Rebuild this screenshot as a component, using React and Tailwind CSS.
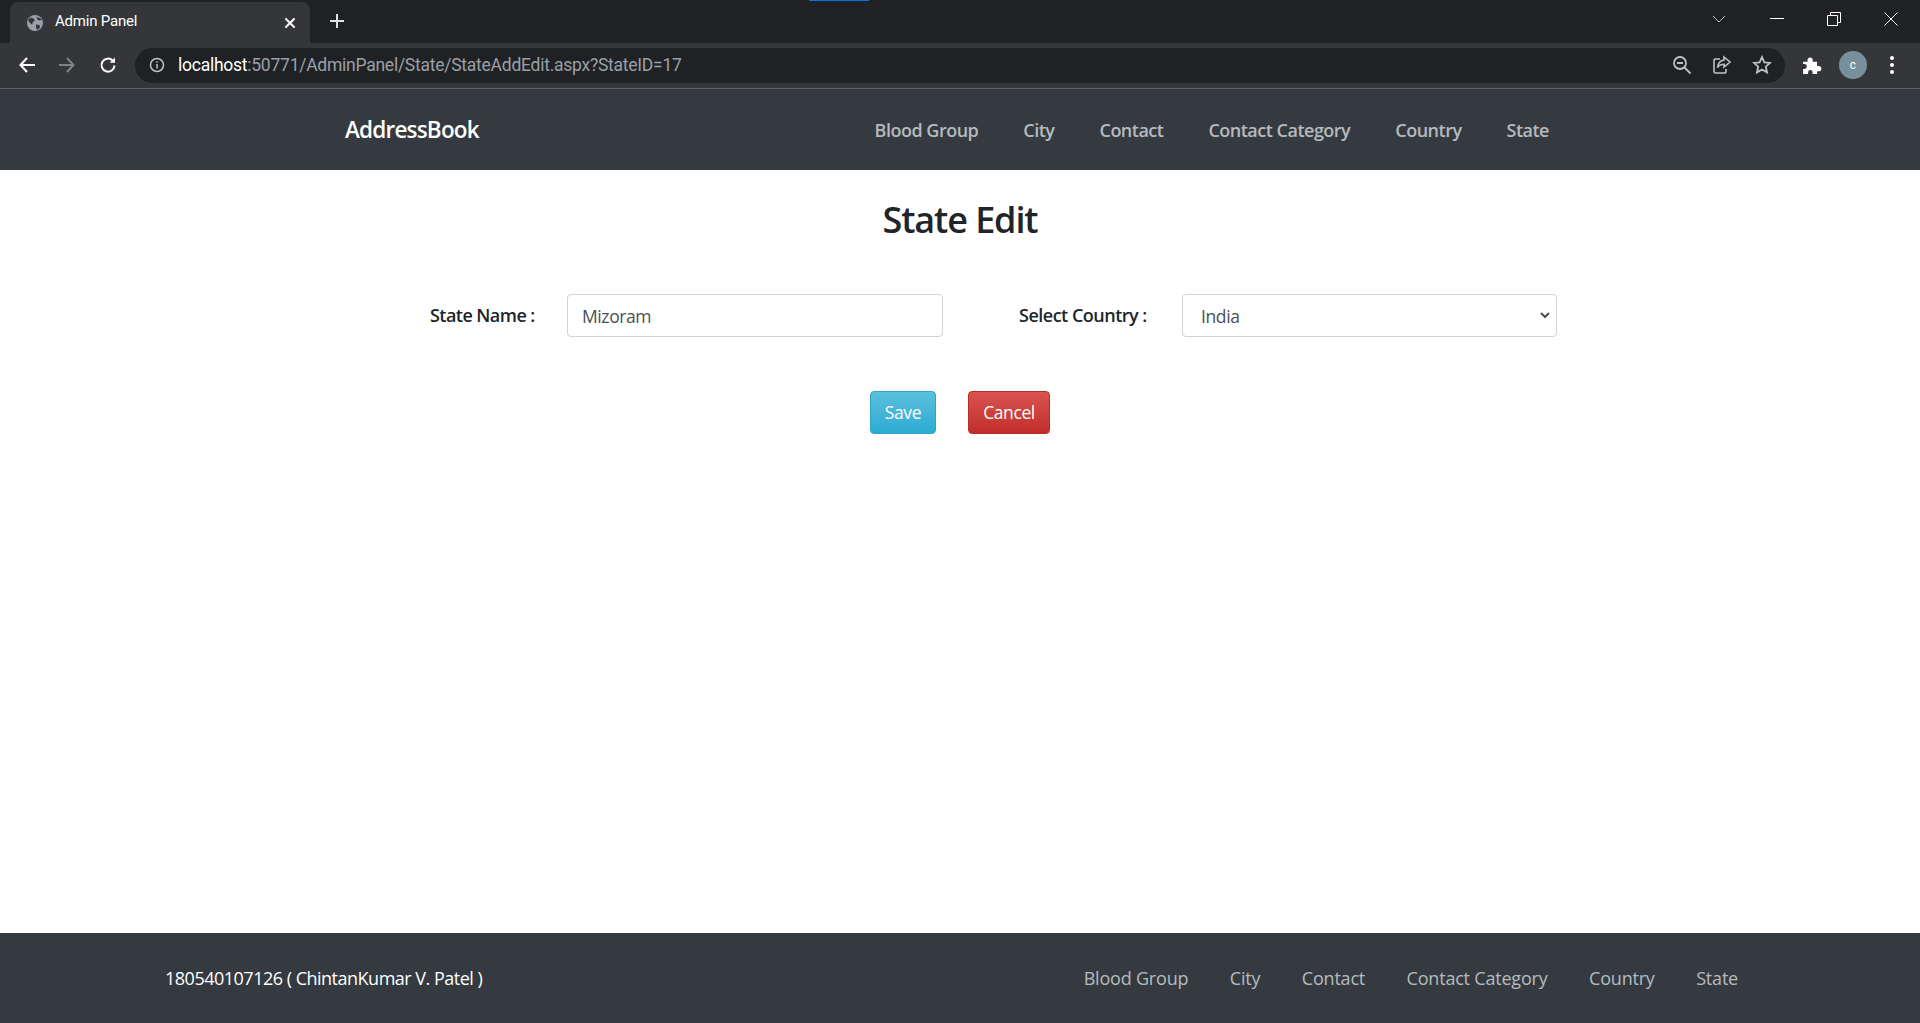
import React from 'react';

const uiFont = "font-['Open_Sans','Noto_Sans',sans-serif]";
const chromeFont = "font-['Roboto','Noto_Sans',sans-serif]";

const links = ['Blood Group', 'City', 'Contact', 'Contact Category', 'Country', 'State'];

const ChromeBar = () => (
  <div className={`relative shrink-0 ${chromeFont}`}>
    <div className="absolute top-0 left-[809px] w-[60px] h-px bg-[#0b74d8]"></div>

    {/* tab strip */}
    <div className="h-[43px] bg-[#202124] flex items-end">
      <div className="ml-[10px] w-[300px] h-[41px] bg-[#35363a] rounded-t-lg flex items-center text-white">
        <svg width="18" height="18" viewBox="0 0 18 18" className="ml-[16px] shrink-0">
          <circle cx="9" cy="9" r="8" fill="#9aa0a6" />
          <path d="M4 3.500l3.500 1 1.500 2-2 1.500-1 2.500-2-1.500-2-2.500zM10 10.500l3.500.5.5 2.500-2.500 2.500-1.500-2.500zM10.500 1.500l1 2 2.500.5 2 2-3 .5-2-1.500z" fill="#35363a" />
        </svg>
        <span className="ml-[11px] text-[15px] leading-none tracking-[-0.2px] mb-[2px]">Admin Panel</span>
        <svg width="12" height="12" viewBox="0 0 12 12" className="ml-auto mr-[14px]" stroke="white" strokeWidth="2" strokeLinecap="round">
          <path d="M2 2l8 8M10 2l-8 8" />
        </svg>
      </div>
      <div className="ml-[19px] mb-[14px] w-4 h-4 flex items-center justify-center">
        <svg width="16" height="16" viewBox="0 0 16 16" stroke="#dfe1e5" strokeWidth="2">
          <path d="M8 1v14M1 8h14" />
        </svg>
      </div>
      <div className="ml-auto self-stretch flex items-center relative">
        <svg width="14" height="8" viewBox="0 0 14 8" fill="none" stroke="#bdc1c6" strokeWidth="1" className="mr-[44px] mb-[6px]">
          <path d="M1 1l6 6 6-6" />
        </svg>
        <div className="w-[14px] h-px bg-white mr-[43px] mb-[6px]"></div>
        <svg width="14" height="14" viewBox="0 0 14 14" fill="none" stroke="white" strokeWidth="1" className="mr-[43px] mb-[6px]">
          <path d="M.5 3.500h10v10H.5zM3.500 3.500V.5h10v10h-3" />
        </svg>
        <svg width="14" height="14" viewBox="0 0 14 14" fill="none" stroke="white" strokeWidth="1" className="mr-[22px] mb-[6px]">
          <path d="M.5.5l13 13M13.500.5l-13 13" />
        </svg>
      </div>
    </div>

    {/* toolbar */}
    <div className="h-[46px] bg-[#35363a] border-b border-[#5f6368] flex items-center pb-[1px]">
      <svg width="18" height="18" viewBox="0 0 18 18" fill="none" stroke="white" strokeWidth="2" className="ml-[18px]">
        <path d="M17 9H3M9 2L2.500 9 9 16" />
      </svg>
      <svg width="18" height="18" viewBox="0 0 18 18" fill="none" stroke="#7f8286" strokeWidth="2" className="ml-[22px]">
        <path d="M1 9h14M9 2l6.500 7L9 16" />
      </svg>
      <svg width="18" height="18" viewBox="0 0 18 18" fill="none" stroke="white" strokeWidth="2" className="ml-[23px]">
        <path d="M15.500 9.500a6.500 6.500 0 1 1-1.900-5" />
        <path d="M16 1.500v5.300h-5.300z" fill="white" stroke="none" />
      </svg>
      <div className="ml-[18px] w-[1650px] h-[35px] rounded-full bg-[#202124] flex items-center">
        <svg width="16" height="16" viewBox="0 0 16 16" fill="none" className="ml-[14px] shrink-0">
          <circle cx="8" cy="8" r="6.500" stroke="#bdc1c6" strokeWidth="1.500" />
          <path d="M8 7v4.500M8 4.300v1.500" stroke="#bdc1c6" strokeWidth="1.500" />
        </svg>
        <span className="ml-[13px] text-[17.500px] leading-none tracking-[-0.25px] text-white mt-[2px]">
          localhost<span className="text-[#9aa0a6]">:50771/AdminPanel/State/StateAddEdit.aspx?StateID=17</span>
        </span>
        <svg width="20" height="20" viewBox="0 0 20 20" fill="none" stroke="#bdc1c6" strokeWidth="1.800" className="ml-auto shrink-0">
          <circle cx="8" cy="8" r="6" />
          <path d="M5 8h6M12.500 12.500l6 6" />
        </svg>
        <svg width="20" height="20" viewBox="0 0 20 20" fill="none" stroke="#bdc1c6" strokeWidth="1.600" className="ml-[20px] shrink-0">
          <path d="M8 4H3.500A1.500 1.500 0 0 0 2 5.500v11A1.500 1.500 0 0 0 3.500 18h9a1.500 1.500 0 0 0 1.500-1.500V14" />
          <path d="M12 2l6 5-6 5V9.300c-3 0-5 1-6.500 3.200C6 9 8 5.500 12 5z" />
        </svg>
        <svg width="20" height="20" viewBox="0 0 20 20" fill="none" stroke="#bdc1c6" strokeWidth="1.800" className="ml-[20px] mr-[13px] shrink-0">
          <path d="M10 2l2.400 5.300 5.600.6-4.200 3.800 1.200 5.700-5-2.900-5 2.900 1.200-5.700L2 7.900l5.600-.6z" />
        </svg>
      </div>
      <svg width="20" height="20" viewBox="0 0 18 18" fill="white" className="ml-[17px] shrink-0">
        <path d="M1 6h4V4.500a2.300 2.300 0 0 1 4.600 0V6h4v4h1.500a2.300 2.300 0 0 1 0 4.600h-1.500V17H9.500v-1.500a2 2 0 0 0-4 0V17H1v-4.500h1.200a2.200 2.200 0 0 0 0-4.400H1z" />
      </svg>
      <div className="ml-[17px] w-7 h-7 rounded-full bg-[#78909c] text-white text-[12px] flex items-center justify-center shrink-0">c</div>
      <div className="ml-[23px] flex flex-col gap-[3px] shrink-0">
        <span className="w-1 h-1 rounded-full bg-white"></span>
        <span className="w-1 h-1 rounded-full bg-white"></span>
        <span className="w-1 h-1 rounded-full bg-white"></span>
      </div>
    </div>
  </div>
);

const Header = () => (
  <nav className="h-[81px] shrink-0 bg-[#343a40] flex items-center pl-[345px] pr-[371px] pt-[1px]">
    <span className="text-white text-[22.500px] font-semibold tracking-[-0.8px]">AddressBook</span>
    <ul className="ml-auto flex gap-[45px]">
      {links.map((l) => (
        <li key={l} className="text-[#b6babe] text-[18px] font-semibold tracking-[-0.5px]">{l}</li>
      ))}
    </ul>
  </nav>
);

const Footer = () => (
  <footer className="h-[90px] shrink-0 bg-[#343a40] flex items-center pl-[165px] pr-[182px]">
    <span className="text-white text-[18px] tracking-[-0.5px]">180540107126 ( ChintanKumar V. Patel )</span>
    <ul className="ml-auto flex gap-[41.500px]">
      {links.map((l) => (
        <li key={l} className="text-[#b6babe] text-[18px] font-medium tracking-[-0.2px]">{l}</li>
      ))}
    </ul>
  </footer>
);

export default function App() {
  return (
    <div className={`h-[1023px] flex flex-col overflow-hidden bg-white ${uiFont}`}>
      <ChromeBar />
      <Header />
      <main className="flex-1">
        <h1 className="mt-[25px] text-center text-[36px] leading-[50px] font-semibold text-[#212529] tracking-[-1.1px]">State Edit</h1>

        <div className="mt-[49px] flex items-center pl-[430px]">
          <label className="w-[137px] text-[18px] font-semibold text-[#212529] tracking-[-0.55px]">State Name :</label>
          <input
            readOnly
            value="Mizoram"
            className="w-[376px] h-[43px] border border-[#ced4da] rounded px-[14px] text-[17.500px] text-[#495057] tracking-[-0.4px] outline-none"
          />
          <label className="ml-[76px] w-[163px] text-[18px] font-semibold text-[#212529] tracking-[-0.5px]">Select Country :</label>
          <div className="relative w-[375px] h-[43px]">
            <select className="appearance-none w-full h-full border border-[#ced4da] rounded pl-[18px] pt-[1px] text-[17.500px] text-[#495057] tracking-[-0.4px] bg-white outline-none">
              <option>India</option>
            </select>
            <svg width="10" height="7" viewBox="0 0 10 7" fill="none" stroke="#495057" strokeWidth="2" className="absolute right-[7px] top-[18px]">
              <path d="M1 1l4 4 4-4" />
            </svg>
          </div>
        </div>

        <div className="mt-[54px] flex pl-[870px] gap-[32px]">
          <button className="w-[66px] h-[43px] rounded border border-[#2aa5cc] bg-gradient-to-b from-[#5bc0de] to-[#2aabd2] text-white text-[17.500px] tracking-[-0.4px]">Save</button>
          <button className="w-[82px] h-[43px] rounded border border-[#b92c28] bg-gradient-to-b from-[#d9534f] to-[#c12e2a] text-white text-[17.500px] tracking-[-0.4px]">Cancel</button>
        </div>
      </main>
      <Footer />
    </div>
  );
}
